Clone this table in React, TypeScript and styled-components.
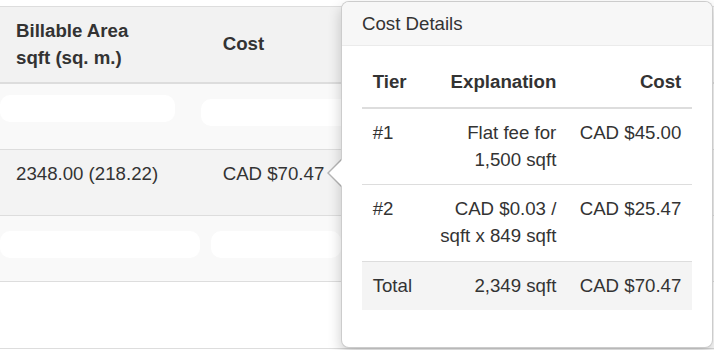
import React from "react";
import styled, { createGlobalStyle } from "styled-components";

const GlobalStyle = createGlobalStyle`
    html, body {
        margin: 0;
        padding: 0;
        background: #ffffff;
    }
    body {
        font-family: "Liberation Sans", Arial, sans-serif;
        font-size: 18.67px;
        color: #333333;
    }
`;

const tiers = [
    { tier: "#1", explanation: "Flat fee for 1,500 sqft", cost: "CAD $45.00" },
    { tier: "#2", explanation: "CAD $0.03 / sqft x 849 sqft", cost: "CAD $25.47" },
];

export default function App() {
    return (
        <>
            <GlobalStyle />
            <Page>
                <BillingTable>
                    <colgroup>
                        <col style={{ width: 212 }} />
                        <col style={{ width: 130 }} />
                        <col />
                    </colgroup>
                    <thead>
                        <tr>
                            <HeadCell>
                                Billable Area
                                <br />
                                sqft (sq. m.)
                            </HeadCell>
                            <HeadCell>Cost</HeadCell>
                            <HeadCell />
                        </tr>
                    </thead>
                    <tbody>
                        <BodyRow $bg="#f9f9f9">
                            <BodyCell>
                                <Redacted $w={175} $top={0} />
                            </BodyCell>
                            <BodyCell>
                                <Redacted $w={160} $top={4} $left={-22} />
                            </BodyCell>
                            <BodyCell />
                        </BodyRow>
                        <BodyRow $bg="#f3f3f3">
                            <BodyCell>2348.00 (218.22)</BodyCell>
                            <BodyCell>CAD $70.47</BodyCell>
                            <BodyCell />
                        </BodyRow>
                        <BodyRow $bg="#f9f9f9">
                            <BodyCell>
                                <Redacted $w={200} $top={4} $left={-16} />
                            </BodyCell>
                            <BodyCell>
                                <Redacted $w={130} $top={4} $left={-12} />
                            </BodyCell>
                            <BodyCell />
                        </BodyRow>
                        <BodyRow $bg="#ffffff">
                            <BodyCell />
                            <BodyCell />
                            <BodyCell />
                        </BodyRow>
                    </tbody>
                </BillingTable>

                <Popover>
                    <PopoverTitle>Cost Details</PopoverTitle>
                    <PopoverContent>
                        <DetailTable>
                            <colgroup>
                                <col style={{ width: 62 }} />
                                <col style={{ width: 143 }} />
                                <col style={{ width: 125 }} />
                            </colgroup>
                            <thead>
                                <tr>
                                    <DetailHead>Tier</DetailHead>
                                    <DetailHead $right>Explanation</DetailHead>
                                    <DetailHead $right>Cost</DetailHead>
                                </tr>
                            </thead>
                            <tbody>
                                {tiers.map((t) => (
                                    <tr key={t.tier}>
                                        <DetailCell>{t.tier}</DetailCell>
                                        <DetailCell $right>{t.explanation}</DetailCell>
                                        <DetailCell $right>{t.cost}</DetailCell>
                                    </tr>
                                ))}
                                <TotalRow>
                                    <DetailCell>Total</DetailCell>
                                    <DetailCell $right>2,349 sqft</DetailCell>
                                    <DetailCell $right>CAD $70.47</DetailCell>
                                </TotalRow>
                            </tbody>
                        </DetailTable>
                    </PopoverContent>
                </Popover>
            </Page>
        </>
    );
}

const Page = styled.div`
    position: relative;
    width: 714px;
    height: 350px;
    overflow: hidden;
    padding-top: 6px;
    box-sizing: border-box;
`;

// 뒤쪽 요금 표
const BillingTable = styled.table`
    width: 760px;
    border-collapse: collapse;
    table-layout: fixed;
    border-top: 1.33px solid #dddddd;
    border-bottom: 1.33px solid #dddddd;
`;

const HeadCell = styled.th`
    background: #f2f2f2;
    text-align: left;
    font-weight: bold;
    line-height: 26.67px;
    padding: 11px 10.67px;
    vertical-align: middle;
    border-bottom: 2.67px solid #dddddd;
    &:first-child {
        padding-left: 16px;
    }
`;

const BodyRow = styled.tr<{ $bg: string }>`
    background: ${(props) => props.$bg};
`;

const BodyCell = styled.td`
    height: 66.2px;
    box-sizing: border-box;
    padding: 11px 10.67px;
    line-height: 26.67px;
    vertical-align: top;
    border-top: 1.33px solid #dddddd;
    white-space: nowrap;
    &:first-child {
        padding-left: 16px;
    }
`;

const Redacted = styled.span<{ $w: number; $top?: number; $left?: number }>`
    display: block;
    position: relative;
    width: ${(props) => props.$w}px;
    height: 27px;
    top: ${(props) => props.$top ?? 0}px;
    left: ${(props) => props.$left ?? -16}px;
    background: #ffffff;
    border-radius: 10px;
`;

// 팝오버
const Popover = styled.div`
    position: absolute;
    left: 341px;
    top: 1px;
    width: 372px;
    height: 347px;
    box-sizing: border-box;
    background: #ffffff;
    border: 1px solid rgba(0, 0, 0, 0.2);
    border-radius: 8px;
    box-shadow: 0 6.67px 13.33px rgba(0, 0, 0, 0.2);

    &::before,
    &::after {
        content: "";
        position: absolute;
        width: 0;
        height: 0;
        border-style: solid;
        border-color: transparent;
    }
    &::before {
        left: -14.67px;
        top: 157px;
        border-width: 14.67px 14.67px 14.67px 0;
        border-right-color: rgba(0, 0, 0, 0.25);
    }
    &::after {
        left: -13.33px;
        top: 158.33px;
        border-width: 13.33px 13.33px 13.33px 0;
        border-right-color: #ffffff;
    }
`;

const PopoverTitle = styled.h3`
    margin: 0;
    padding: 11px 20px;
    font-size: 18.67px;
    font-weight: normal;
    line-height: 21.33px;
    background: #f7f7f7;
    border-bottom: 1px solid #ebebeb;
    border-radius: 7px 7px 0 0;
`;

const PopoverContent = styled.div`
    padding: 12px 20px;
`;

const DetailTable = styled.table`
    width: 330px;
    border-collapse: collapse;
    table-layout: fixed;
    margin-bottom: 26.67px;
`;

const DetailHead = styled.th<{ $right?: boolean }>`
    text-align: ${(props) => (props.$right ? "right" : "left")};
    font-weight: bold;
    padding: 11px 10.67px;
    line-height: 26.67px;
    border-bottom: 2.67px solid #dddddd;
    vertical-align: bottom;
`;

const DetailCell = styled.td<{ $right?: boolean }>`
    text-align: ${(props) => (props.$right ? "right" : "left")};
    padding: 11px 10.67px;
    line-height: 26.67px;
    vertical-align: top;
    border-top: 1.33px solid #dddddd;
`;

const TotalRow = styled.tr`
    background: #f4f4f4;
`;
